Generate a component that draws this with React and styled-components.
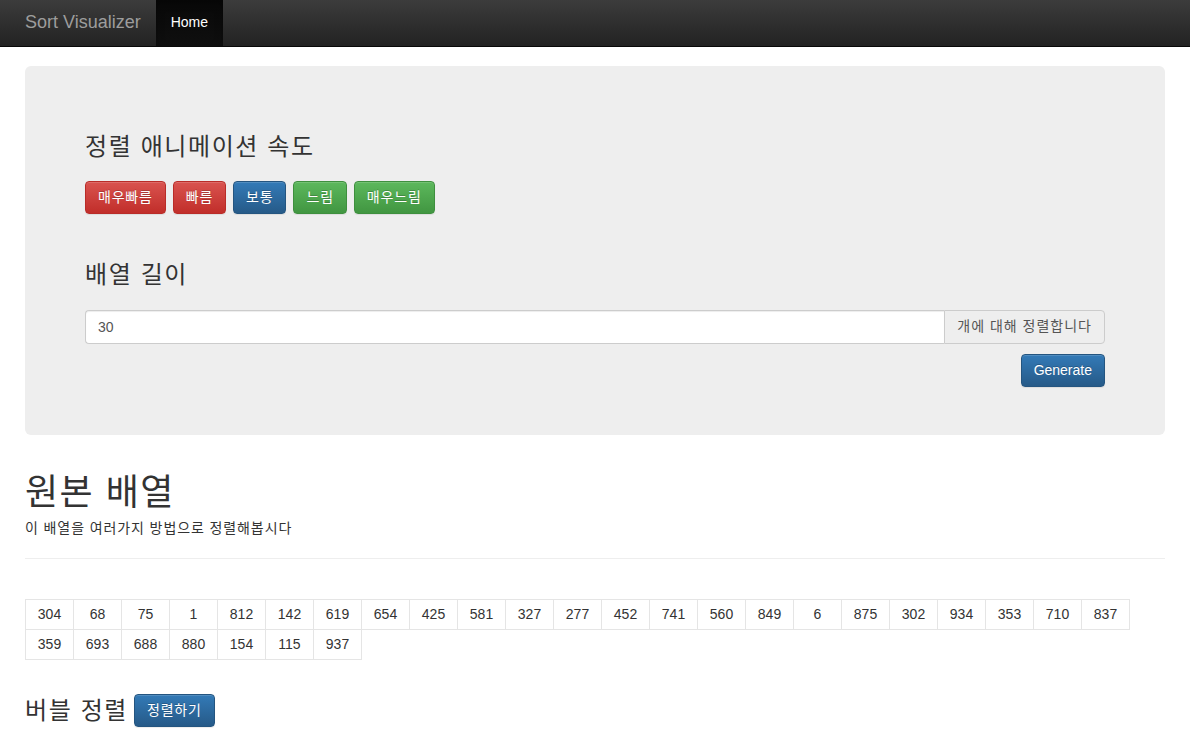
import styled, { createGlobalStyle } from 'styled-components';

const numbers = [
  304, 68, 75, 1, 812, 142, 619, 654, 425, 581, 327, 277, 452, 741, 560, 849,
  6, 875, 302, 934, 353, 710, 837, 359, 693, 688, 880, 154, 115, 937,
];

const speeds = [
  { label: '매우빠름', variant: 'danger' },
  { label: '빠름', variant: 'danger' },
  { label: '보통', variant: 'primary' },
  { label: '느림', variant: 'success' },
  { label: '매우느림', variant: 'success' },
];

const App = () => {
  return (
    <>
      <GlobalStyle />
      <Navbar>
        <Brand>Sort Visualizer</Brand>
        <NavLink>Home</NavLink>
      </Navbar>
      <Container>
        <Jumbotron>
          <SectionTitle>정렬 애니메이션 속도</SectionTitle>
          <ButtonRow>
            {speeds.map((s) => (
              <Button key={s.label} variant={s.variant} $ko>{s.label}</Button>
            ))}
          </ButtonRow>
          <SectionTitle $spaced>배열 길이</SectionTitle>
          <InputGroup>
            <Input defaultValue="30" />
            <Addon>개에 대해 정렬합니다</Addon>
          </InputGroup>
          <Actions>
            <Button variant="primary">Generate</Button>
          </Actions>
        </Jumbotron>

        <PageTitle>원본 배열</PageTitle>
        <Lead>이 배열을 여러가지 방법으로 정렬해봅시다</Lead>
        <Divider />

        <Cells>
          {numbers.map((n, i) => (
            <Cell key={i}>{n}</Cell>
          ))}
        </Cells>

        <SortHeader>
          버블 정렬
          <Button variant="primary" $ko>정렬하기</Button>
        </SortHeader>
      </Container>
    </>
  );
};

const GlobalStyle = createGlobalStyle`
  body {
    margin: 0;
    background: #fff;
    color: #333;
    font-family: 'Liberation Sans', Arial, 'Noto Sans CJK KR', sans-serif;
    font-size: 14px;
    line-height: 1.42857;
  }
  * { box-sizing: border-box; }
`;

const Navbar = styled.div`
  height: 47px;
  display: flex;
  align-items: stretch;
  padding: 0 10px;
  background: linear-gradient(to bottom, #3c3c3c 0, #222 100%);
  border-bottom: 1px solid #080808;
`;

const Brand = styled.span`
  padding: 0 15px;
  display: flex;
  align-items: center;
  font-size: 18px;
  color: #9d9d9d;
`;

const NavLink = styled.span`
  padding: 0 15px;
  display: flex;
  align-items: center;
  color: #fff;
  background: linear-gradient(to bottom, #080808 0, #0f0f0f 100%);
  box-shadow: inset 0 3px 9px rgba(0, 0, 0, 0.25);
`;

const Container = styled.div`
  width: 1170px;
  margin: 0 auto;
  padding: 19px 15px 0;
`;

const Jumbotron = styled.div`
  background: #eee;
  border-radius: 6px;
  padding: 48px 60px;
  margin-bottom: 38px;
`;

const SectionTitle = styled.h3`
  margin: ${(p) => (p.$spaced ? '48px' : '20px')} 0 10px;
  font-size: 24px;
  font-weight: 400;
  line-height: 1.1;
  letter-spacing: 1.6px;
`;

const ButtonRow = styled.div`
  display: flex;
  gap: 7px;
  margin-top: 21px;
`;

const palette = {
  danger: ['#d9534f', '#c12e2a', '#b92c28'],
  primary: ['#337ab7', '#265a88', '#245580'],
  success: ['#5cb85c', '#419641', '#3e8f3e'],
};

const Button = styled.button`
  font-family: inherit;
  font-size: 14px;
  line-height: 21px;
  padding: 5px 12px;
  border-radius: 4px;
  color: #fff;
  cursor: pointer;
  letter-spacing: ${(p) => (p.$ko ? '0.8px' : '0')};
  border: 1px solid ${(p) => palette[p.variant][2]};
  background: linear-gradient(
    to bottom,
    ${(p) => palette[p.variant][0]} 0,
    ${(p) => palette[p.variant][1]} 100%
  );
  text-shadow: 0 -1px 0 rgba(0, 0, 0, 0.2);
  box-shadow: inset 0 1px 0 rgba(255, 255, 255, 0.15), 0 1px 1px rgba(0, 0, 0, 0.075);
`;

const InputGroup = styled.div`
  display: flex;
  margin-top: 21px;
`;

const Input = styled.input`
  flex: 1;
  height: 34px;
  padding: 6px 12px;
  font-family: inherit;
  font-size: 14px;
  color: #555;
  background: #fff;
  border: 1px solid #ccc;
  border-right: 0;
  border-radius: 4px 0 0 4px;
  box-shadow: inset 0 1px 1px rgba(0, 0, 0, 0.075);
  outline: none;
`;

const Addon = styled.span`
  display: flex;
  align-items: center;
  padding: 6px 12px;
  font-size: 14px;
  letter-spacing: 1px;
  color: #555;
  background: #eee;
  border: 1px solid #ccc;
  border-radius: 0 4px 4px 0;
`;

const Actions = styled.div`
  display: flex;
  justify-content: flex-end;
  margin-top: 10px;
`;

const PageTitle = styled.h1`
  margin: 0 0 7px;
  font-size: 36px;
  font-weight: 400;
  line-height: 1.1;
  letter-spacing: 1.5px;
`;

const Lead = styled.p`
  margin: 0 0 10px;
  letter-spacing: 0.9px;
`;

const Divider = styled.hr`
  margin: 19px 0 0;
  border: 0;
  border-top: 1px solid #eee;
`;

const Cells = styled.div`
  display: flex;
  flex-wrap: wrap;
  margin-top: 40px;
  padding: 1px 0 0 1px;
`;

const Cell = styled.div`
  width: 49px;
  height: 31px;
  margin: -1px 0 0 -1px;
  border: 1px solid #e5e5e5;
  display: flex;
  align-items: center;
  justify-content: center;
  font-size: 14px;
`;

const SortHeader = styled.h3`
  display: flex;
  align-items: center;
  gap: 6px;
  margin: 34px 0 10px;
  font-size: 24px;
  font-weight: 400;
  line-height: 1.1;
  letter-spacing: 1.6px;
`;

export default App;
